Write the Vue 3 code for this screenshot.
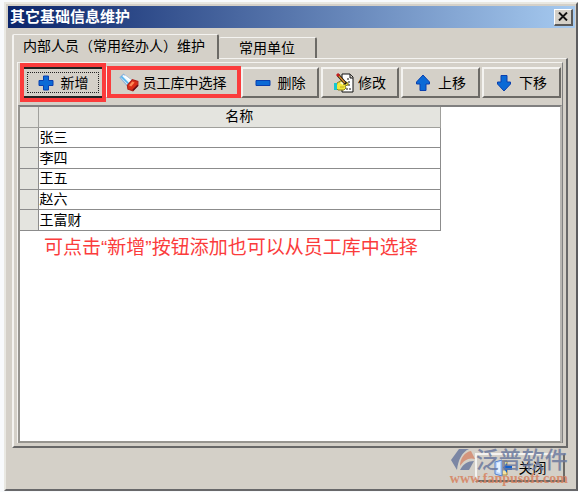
<script setup>
import { ref } from 'vue'

const tabs = ['内部人员（常用经办人）维护', '常用单位']
const activeTab = ref(0)
const tools = [
  { icon: 'add', label: '新增' },
  { icon: 'torch', label: '员工库中选择' },
  { icon: 'remove', label: '删除' },
  { icon: 'edit', label: '修改' },
  { icon: 'up', label: '上移' },
  { icon: 'down', label: '下移' },
]
const people = ['张三', '李四', '王五', '赵六', '王富财']
</script>

<template>
  <div class="window">
    <header class="titlebar">
      <h1>其它基础信息维护</h1>
      <button class="close-x" type="button" aria-label="关闭窗口">
        <svg width="10" height="9" viewBox="0 0 10 9"><path d="M1 .5 9 8.5M9 .5 1 8.5" stroke="#111" stroke-width="1.9" /></svg>
      </button>
    </header>

    <main class="body">
      <div class="tabs" role="tablist">
        <button
          v-for="(tab, i) in tabs"
          :key="tab"
          type="button"
          role="tab"
          class="tab"
          :class="{ active: i === activeTab }"
          :aria-selected="i === activeTab"
          @click="activeTab = i"
        >{{ tab }}</button>
      </div>

      <section class="panel">
        <div class="page">
          <div class="toolbar">
            <button v-for="tool in tools" :key="tool.icon" type="button" class="tool" :class="tool.icon">
              <svg v-if="tool.icon === 'add'" width="16" height="16" viewBox="0 0 16 16">
                <path d="M5.5 1h5v4.500h4.500v5h-4.500v4.500h-5v-4.500H1v-5h4.500z" fill="#0b6ad6" stroke="#0a3fae" />
              </svg>
              <svg v-else-if="tool.icon === 'torch'" width="20" height="19" viewBox="0 0 18 17">
                <path d="M1 4 4 1l8 6-4 5z" fill="#eef7fd" stroke="#8fb2d8" />
                <path d="M2 3 9 10" stroke="#55b4ee" stroke-width="1.500" />
                <path d="M5 2.500 11 7" stroke="#fff" stroke-width="1.500" />
                <path d="M7.500 11 12 6l5 1.500v3.500L12.500 16 8 14.500z" fill="#d92e18" stroke="#b02018" />
                <path d="m9 11 3-3.500 2 1-3 3.500z" fill="#ff8a56" />
                <path d="M12.500 15.500 17 11" stroke="#651018" stroke-width="1.500" />
              </svg>
              <svg v-else-if="tool.icon === 'remove'" width="16" height="16" viewBox="0 0 16 16">
                <path d="M1 5.500h14v5H1z" fill="#0b6ad6" stroke="#0a3fae" />
              </svg>
              <svg v-else-if="tool.icon === 'edit'" width="20" height="20" viewBox="0 0 20 20">
                <path d="M8 1h8l3 3v15H8z" fill="#fff" stroke="#111" />
                <path d="M16 1v4h3" fill="#d4d0c8" stroke="#111" />
                <path d="M13 6h2M14 9h3M14 12h3M12 16h5" stroke="#111" stroke-dasharray="2 1" />
                <path d="M3 10 8 7l6 3v2l-3 1 1 2-2 2H4l-2-2z" fill="#f5e93c" stroke="#8a801e" />
                <path d="M5 9.500 8 8l3 2-2 2M6 14h4" fill="#fffbc0" stroke="#b8a820" />
                <path d="M0 10h3v7H0z" fill="#18c7cf" />
                <path d="m4 2 8 9" stroke="#111" stroke-width="3" />
                <path d="m4 2 7 8" stroke="#d98b26" stroke-width="1.500" />
                <path d="m3 1 2 2" stroke="#c41c1c" stroke-width="3" />
              </svg>
              <svg v-else-if="tool.icon === 'up'" width="16" height="18" viewBox="0 0 16 18">
                <path d="M8 1 14.500 8v2H11v6.500H5V10H1.500V8z" fill="#0b6ad6" stroke="#0a3fae" />
              </svg>
              <svg v-else width="16" height="18" viewBox="0 0 16 18">
                <path d="M8 17 1.500 10V8H5V1.500h6V8h3.500v2z" fill="#0b6ad6" stroke="#0a3fae" />
              </svg>
              <span>{{ tool.label }}</span>
            </button>
          </div>

          <div class="grid-view">
            <table>
              <thead>
                <tr><th class="mark"></th><th>名称</th></tr>
              </thead>
              <tbody>
                <tr v-for="name in people" :key="name"><td class="mark"></td><td>{{ name }}</td></tr>
              </tbody>
            </table>
            <p class="hint">可点击“新增”按钮添加也可以从员工库中选择</p>
          </div>
        </div>
      </section>
    </main>

    <footer class="footer">
      <button type="button" class="close">
        <svg width="18" height="18" viewBox="0 0 18 18">
          <path d="M8 2h5v14H8z" fill="#f3e3a0" stroke="#a48643" />
          <path d="m1 3 7-2v16l-7-2z" fill="#b9d5fa" stroke="#5681cf" />
          <path d="m3 4 3-1v11l-3-1z" fill="#e6f2ff" />
          <path d="M9 8.500 13 4v3h5v4h-5v3z" fill="#1261cc" />
        </svg>
        <span>关闭</span>
      </button>
      <div class="brand">
        <svg width="26" height="24" viewBox="0 0 26 24">
          <path d="M9 1h10C12 4 8 12 7 22L1 12z" fill="#6c7a9e" />
          <path d="M10 18c0-8 5-14 11-15l4 8c-6-2-11 1-15 7z" fill="#d58b70" />
          <path d="M10 22c3-6 8-9 14-9l-5 9z" fill="#6c7a9e" />
        </svg>
        <strong>泛普软件</strong>
        <small>www.fanpusoft.com</small>
      </div>
    </footer>
  </div>
</template>

<style>
body {
  margin: 0;
  background: #f8fafc;
}
</style>

<style scoped>
* {
  box-sizing: border-box;
}

.window {
  display: flex;
  flex-direction: column;
  min-height: calc(100vh - 3px);
  margin: 2px 0 1px 4px;
  padding: 2px 1px 1px 2px;
  border: 2px solid;
  border-color: #e9e8e2 #5c5c5e #68686a #e9e8e2;
  background: #d4d0c8;
  color: #000;
  font-family: "Liberation Sans", "Noto Sans CJK SC", sans-serif;
  font-size: 14px;
  line-height: 20px;
}

button {
  margin: 0;
  font: inherit;
  color: inherit;
}

svg {
  flex: none;
  fill: none;
}

.titlebar {
  display: flex;
  align-items: center;
  justify-content: space-between;
  height: 22px;
  padding: 0 2px;
  background: linear-gradient(90deg, #0a246a, #a6caf0);
}

h1 {
  margin: 0;
  color: #fff;
  font-size: 15px;
  line-height: 22px;
}

.close-x {
  display: flex;
  align-items: center;
  justify-content: center;
  width: 19px;
  height: 17px;
  padding: 0;
  border: 2px solid;
  border-width: 1px 2px 2px 1px;
  border-color: #fff #5a5a5a #5a5a5a #fff;
  background: #d4d0c8;
}

.body {
  display: flex;
  flex: 1;
  flex-direction: column;
  padding: 6px 7px 0 4px;
}

.tabs {
  display: flex;
  align-items: flex-end;
  height: 24px;
}

.tab {
  height: 21px;
  padding: 0 20px;
  border: 1px solid;
  border-width: 1px 2px 0 0;
  border-color: #f4f3f0 #6c6a66 transparent;
  border-radius: 2px 2px 0 0;
  background: #d4d0c8;
}

.tab.active {
  z-index: 1;
  height: 25px;
  margin-bottom: -1px;
  padding: 0 12px 3px 9px;
  border-width: 1px 2px 0 2px;
  border-color: #f4f3f0 #6c6a66 transparent #f4f3f0;
}

.panel {
  display: flex;
  flex: 1;
  padding: 3px;
  border: 2px solid;
  border-width: 1px 2px 2px 2px;
  border-color: #f4f3f0 #686868 #686868 #f4f3f0;
}

.page {
  display: flex;
  flex: 1;
  flex-direction: column;
  border: 1px solid;
  border-width: 1px 1px 0;
  border-color: #f4f3f0 #808080 #808080 #f4f3f0;
}

.toolbar {
  display: grid;
  grid-template-columns: 82fr 133fr 78fr 78fr 79fr 79fr;
  gap: 2px;
  padding: 4px 1px 7px 4px;
}

.tool,
.close {
  display: flex;
  align-items: center;
  justify-content: center;
  gap: 7px;
  height: 31px;
  padding: 0;
  border: 2px solid;
  border-color: #f4f3f0 #6c6a66 #6c6a66 #f4f3f0;
  background: #d4d0c8;
  white-space: nowrap;
}

.tool.torch,
.tool.edit {
  gap: 4px;
}

.tool.add,
.tool.torch {
  position: relative;
}

.tool.add {
  border-color: #222 #555 #222 #f4f3f0;
  outline: 1px dotted #222;
  outline-offset: -6px;
}

.tool.add::after,
.tool.torch::after {
  position: absolute;
  border: 4px solid #fb3c3c;
  content: "";
  pointer-events: none;
}

.tool.add::after {
  inset: -6px -4px;
}

.tool.torch::after {
  inset: -3px -4px -2px -1px;
}

.grid-view {
  flex: 1;
  border: 2px solid;
  border-color: #808080 #b8b6b2 #96948f #96948f;
  background: #fff;
}

table {
  width: 78%;
  height: 124px;
  border-collapse: collapse;
  table-layout: fixed;
}

th,
td {
  height: 20px;
  padding: 0 1px;
  border-right: 1px solid #8c8c8c;
  border-bottom: 1px solid #8c8c8c;
  line-height: 19px;
  text-align: left;
  font-weight: 400;
}

th {
  border-color: #a0a09c;
  background: #e4e4df;
  text-align: center;
}

.mark {
  width: 18px;
  background: #e4e4df;
}

.hint {
  margin: 4px 0 0 24px;
  color: #fb3c3c;
  font-size: 19px;
  font-weight: 400;
  line-height: 26px;
}

.footer {
  position: relative;
  display: flex;
  justify-content: flex-end;
  padding: 5px 10px 6px;
}

.close {
  width: 90px;
  height: 29px;
}

.brand {
  position: absolute;
  top: 0;
  right: 7px;
  display: grid;
  grid-template-columns: 26px auto;
  opacity: 0.85;
  pointer-events: none;
}

.brand strong {
  color: #6c7a9e;
  font-size: 23px;
  font-weight: 500;
  line-height: 25px;
}

.brand small {
  grid-column: 1 / -1;
  color: #d7825f;
  font-family: "Liberation Serif", serif;
  font-size: 14px;
  font-weight: 700;
  line-height: 12px;
}
</style>
